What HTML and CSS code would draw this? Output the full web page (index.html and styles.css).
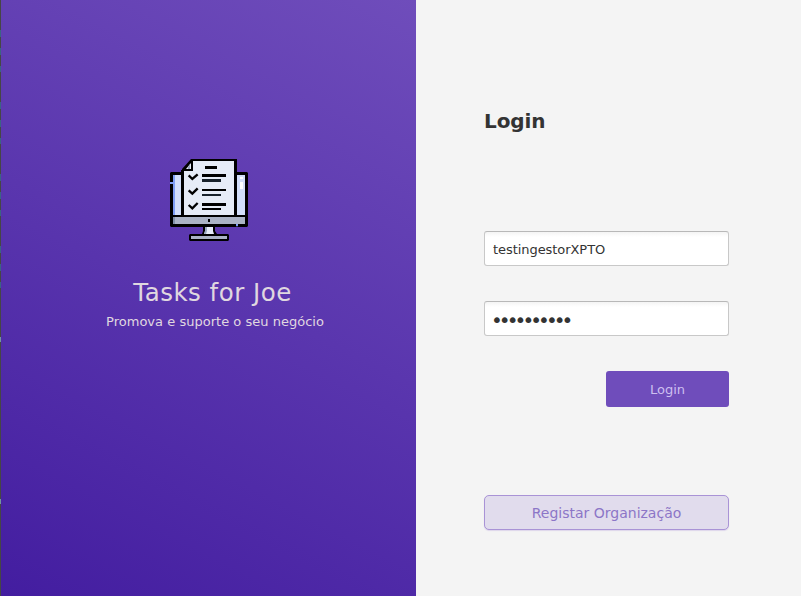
FILE: index.html
```html
<!DOCTYPE html>
<html lang="pt">
<head>
<meta charset="utf-8">
<title>Tasks for Joe</title>
<link rel="stylesheet" href="styles.css">
</head>
<body>
<main class="window">
  <div class="edge"></div>
  <section class="brand">
    <svg class="logo" viewBox="0 0 300 300" aria-hidden="true">
      <path fill="#000" d="M33 66H66V57L93 27H231V66H261L264 69V228L261 231H33L30 228V69Z"/>
      <path fill="#d3dffa" d="M39 75H63V195H39ZM231 75H255V195H231Z"/>
      <path fill="#7f9ff5" d="M39 75H45V195H39ZM30 96H39V102H30Z"/>
      <path fill="#fff" d="M240 81H249V87H240ZM240 96H249V117H240Z"/>
      <path fill="#e6ecf7" d="M99 33H222V195H72V63H99Z"/>
      <path fill="#000" d="M63 60H72V186H63Z"/>
      <path fill="#e6ecf7" d="M78 57L93 39V57Z"/>
      <path fill="#9ba9c2" d="M84 51L90 42V57H84Z"/>
      <path fill="#abb3c5" d="M39 201H255V222H39Z"/>
      <path fill="#8190a8" d="M39 201H45V222H39Z"/>
      <path fill="#000" d="M144 207H150V216H144ZM135 48H171V57H135ZM126 72H198V81H126ZM126 117H198V123H126ZM126 159H198V168H126ZM126 174H183V180H126Z"/>
      <path fill="#17212b" d="M126 87H183V96H126ZM126 132H183V138H126Z"/>
      <path fill="none" stroke="#000" stroke-width="7" d="M86 76L97 87L113 73M86 121L97 131L113 115M86 165L97 175L113 159"/>
      <path fill="#000" d="M129 231H165V243L171 252H204L207 255V270L204 273H90L87 270V255L90 252H126L129 243Z"/>
      <path fill="#e6ecf7" d="M135 231H159V243L162 252H132L135 243Z"/>
      <path fill="#9baac0" d="M135 231H141V243L138 252H132L135 243Z"/>
      <path fill="#abb3c5" d="M93 258H201V267H93Z"/>
      <path fill="#7f9ff5" d="M228 222H234V229H228Z"/>
    </svg>
    <h1 class="name">Tasks for Joe</h1>
    <p class="tagline">Promova e suporte o seu negócio</p>
  </section>
  <form class="login">
    <h2 class="heading">Login</h2>
    <input class="field user" type="text" value="testingestorXPTO" aria-label="Utilizador">
    <div class="field password"><span class="mask">••••••••••</span></div>
    <button class="submit" type="button">Login</button>
    <button class="register" type="button">Registar Organização</button>
  </form>
</main>
</body>
</html>
```

FILE: styles.css
```css
* { box-sizing: border-box; }
body { margin: 0; font-family: "DejaVu Sans", sans-serif; color: #333; }
.window { display: grid; grid-template-columns: 1px 415px 1fr; width: 801px; height: 596px; background: #f4f4f4; overflow: hidden; }
.edge {
  background:
    linear-gradient(#7395a0, #7395a0) 0 337px / 1px 5px no-repeat,
    linear-gradient(#7395a0, #7395a0) 0 499px / 1px 5px no-repeat,
    linear-gradient(#464646, #464646) 0 290px / 1px 306px no-repeat,
    linear-gradient(#464646, #464646) 0 0 / 1px 29px no-repeat,
    repeating-linear-gradient(#464646 0 30px, #3b6484 30px 37px, #464646 37px 48px, #3b6484 48px 55px, #464646 55px 66px, #3b6484 66px 72px);
}
.brand { display: flex; flex-direction: column; align-items: center; padding-top: 150px; background: linear-gradient(27deg, #431da0, #6f4dbb); color: #e0d8e0; }
.logo { width: 100px; height: 100px; margin-left: 3px; }
.name { margin: 28px 0 0 8px; font-size: 24.5px; line-height: 30px; font-weight: 400; letter-spacing: 0.48px; white-space: nowrap; }
.tagline { margin: 4px 0 0 13px; font-size: 13px; line-height: 20px; letter-spacing: 0.02px; white-space: nowrap; }
.login { display: flex; flex-direction: column; width: 245px; margin-left: 68px; padding-top: 108px; }
.heading { margin: 0 0 97px; font-size: 20px; line-height: 26px; font-weight: 700; letter-spacing: -0.1px; }
.field { width: 245px; height: 35px; margin: 0 0 35px; padding: 0 8px; border: 1px solid #c8c8c8; border-top-color: #b8b8b8; border-radius: 3px; background: linear-gradient(#f4f4f4, #fff 5px); font: 13px "DejaVu Sans", sans-serif; color: #333; outline: none; }
.user { padding-top: 2px; letter-spacing: -0.06px; }
.password { display: flex; align-items: center; }
.mask { font-size: 20px; line-height: 20px; letter-spacing: -3.95px; padding-top: 3px; margin-left: -2px; }
.submit { align-self: flex-end; width: 123px; height: 36px; padding: 0; border: 0; border-radius: 3px; background: #6f4dbb; color: #cdbff0; font: 13px "DejaVu Sans", sans-serif; }
.register { width: 245px; height: 35px; margin-top: 88px; padding: 0; border: 1px solid #a993d6; border-radius: 5px; background: #e1dced; color: #8c76c7; font: 14px "DejaVu Sans", sans-serif; box-shadow: 0 1px 1px rgba(169, 147, 214, 0.3); }
```
